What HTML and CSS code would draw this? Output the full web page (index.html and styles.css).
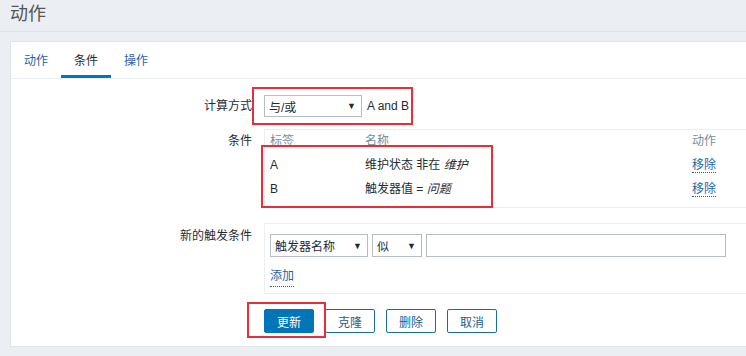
FILE: index.html
```html
<!DOCTYPE html>
<html lang="zh-CN">
<head>
    <meta charset="UTF-8">
    <title>动作</title>
    <link rel="stylesheet" href="styles.css">
</head>
<body>
    <div class="header">
        <h1 class="title">动作</h1>
    </div>
    <div class="panel">
        <ul class="tabs">
            <li class="tab">动作</li>
            <li class="tab active">条件</li>
            <li class="tab">操作</li>
        </ul>
        <div class="form">
            <div class="row row-calc">
                <div class="label">计算方式</div>
                <div class="controls mark mark-calc">
                    <div class="select select-calc"><span>与/或</span><span class="arrow">▼</span></div>
                    <span class="formula">A and B</span>
                </div>
            </div>
            <div class="row">
                <div class="label">条件</div>
                <div class="box cond-box">
                    <div class="cond-grid head">
                        <span>标签</span><span>名称</span><span>动作</span>
                    </div>
                    <div class="cond-grid">
                        <span>A</span><span>维护状态 非在 <em>维护</em></span><span><a class="link">移除</a></span>
                    </div>
                    <div class="cond-grid">
                        <span>B</span><span>触发器值 = <em>问题</em></span><span><a class="link">移除</a></span>
                    </div>
                    <div class="mark-rows"></div>
                </div>
            </div>
            <div class="row">
                <div class="label label-new">新的触发条件</div>
                <div class="box new-box">
                    <div class="new-line">
                        <div class="select select-type"><span>触发器名称</span><span class="arrow">▼</span></div>
                        <div class="select select-op"><span>似</span><span class="arrow">▼</span></div>
                        <div class="input"></div>
                    </div>
                    <a class="link add-link">添加</a>
                </div>
            </div>
            <div class="row row-buttons">
                <div class="label"></div>
                <div class="buttons">
                    <span class="mark mark-btn"><button class="btn btn-main">更新</button></span>
                    <button class="btn btn-alt">克隆</button>
                    <button class="btn btn-alt">删除</button>
                    <button class="btn btn-alt">取消</button>
                </div>
            </div>
        </div>
    </div>
</body>
</html>
```

FILE: styles.css
```css
body {
    margin: 0;
    background: #ebeef2;
    font-family: "Liberation Sans", "Noto Sans CJK SC", sans-serif;
    font-size: 12px;
    color: #1f2c33;
    overflow: hidden;
}
.header {
    height: 31px;
    padding-left: 10px;
    border-bottom: 1px solid #dce2e6;
}
.title {
    margin: 0;
    font-size: 18px;
    font-weight: normal;
    line-height: 28px;
    color: #555;
}
.panel {
    margin: 9px 0 0 10px;
    background: #fff;
    border: 1px solid #dfe4e7;
    border-right: none;
}
.tabs {
    display: flex;
    margin: 0;
    padding: 0;
    list-style: none;
    height: 36px;
    border-bottom: 1px solid #ebeef2;
}
.tab {
    padding: 5px 13px 0;
    line-height: 28px;
    border-bottom: 3px solid transparent;
    color: #1f65a6;
}
.tab.active {
    color: #1f2c33;
    border-bottom-color: #0275b8;
}
.form {
    padding: 16px 0 13px;
}
.row {
    display: flex;
    margin-bottom: 15px;
}
.row-calc {
    margin-bottom: 12px;
}
.row-buttons {
    margin-bottom: 0;
}
.label {
    width: 241px;
    flex: none;
    margin-right: 12px;
    text-align: right;
    line-height: 24px;
}
.row-calc .label {
    line-height: 22px;
}
.label-new {
    padding-top: 1px;
}
.controls {
    display: flex;
    align-items: center;
}
.select {
    display: flex;
    justify-content: space-between;
    align-items: center;
    box-sizing: border-box;
    height: 23px;
    padding: 0 5px 0 4px;
    border: 1px solid #b7bec3;
    background: #fff;
}
.arrow {
    font-size: 9px;
    color: #1f2c33;
}
.select-calc {
    width: 98px;
    height: 22px;
}
.formula {
    margin-left: 5px;
}
.box {
    flex: 1;
    border: 1px solid #ebeef2;
    border-right: none;
    padding: 0 5px;
}
.cond-box {
    position: relative;
    padding-bottom: 6px;
}
.cond-grid {
    display: grid;
    grid-template-columns: 95px 327px auto;
    line-height: 24px;
}
.cond-grid.head {
    line-height: 23px;
    color: #768d99;
}
em {
    font-style: italic;
}
.link {
    color: #1f65a6;
    border-bottom: 1px dotted #1f65a6;
    cursor: pointer;
}
.new-box {
    padding-top: 10px;
    padding-bottom: 6px;
}
.new-line {
    display: flex;
    gap: 4px;
}
.select-type {
    width: 98px;
}
.select-op {
    width: 50px;
}
.input {
    width: 300px;
    height: 23px;
    box-sizing: border-box;
    border: 1px solid #b7bec3;
}
.add-link {
    display: inline-block;
    margin-top: 10px;
    line-height: 19px;
}
.buttons {
    display: flex;
    gap: 11px;
}
.btn {
    box-sizing: border-box;
    width: 50px;
    height: 24px;
    padding: 0;
    border: 1px solid #0275b8;
    border-radius: 2px;
    font-family: inherit;
    font-size: 12px;
}
.btn-main {
    background: #0275b8;
    color: #fff;
}
.btn-alt {
    background: #fff;
    color: #1d5f8f;
    border-color: #1f6d9e;
}
/* red annotation frames */
.mark {
    position: relative;
    display: flex;
}
.mark::after {
    content: "";
    position: absolute;
    border: 2px solid #e3303c;
}
.mark-calc::after {
    left: -12px;
    top: -8px;
    right: -4px;
    bottom: -8px;
}
.mark-btn::after {
    left: -17px;
    top: -7px;
    right: -12px;
    bottom: -5px;
}
.mark-rows {
    position: absolute;
    left: -4px;
    top: 15px;
    width: 228px;
    height: 59px;
    border: 2px solid #e3303c;
}
```
